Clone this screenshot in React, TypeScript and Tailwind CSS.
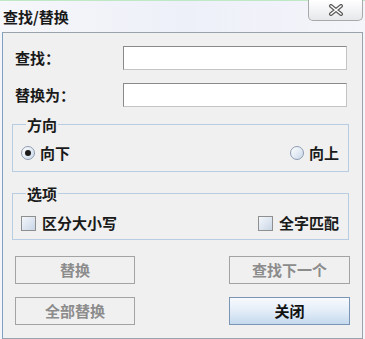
import React from "react";

const font = { fontFamily: '"Noto Sans CJK SC", "Noto Sans", sans-serif' };

function Radio({ checked }: { checked?: boolean }) {
  return (
    <span className="w-[14px] h-[14px] rounded-full border border-[#8e9bb0] bg-gradient-to-br from-[#ffffff] to-[#c9d8ea] flex items-center justify-center shrink-0">
      {checked && <span className="w-[6px] h-[6px] rounded-full bg-[#1a1a1a]" />}
    </span>
  );
}

function Check() {
  return (
    <span className="w-[15px] h-[15px] border border-[#8f8f8f] bg-gradient-to-br from-[#f4f7fb] to-[#c9d6e6] shrink-0" />
  );
}

function Btn({ children, primary }: { children: React.ReactNode; primary?: boolean }) {
  return primary ? (
    <div className="h-[28px] flex items-center justify-center border border-[#7b95b5] bg-gradient-to-b from-[#f7fafd] via-[#e3edf8] to-[#c5d9ee] text-[15px] font-bold text-[#111]">
      {children}
    </div>
  ) : (
    <div className="h-[28px] flex items-center justify-center border border-[#a3a3a3] bg-[#f0f0f0] text-[15px] font-bold text-[#8c8c8c]">
      {children}
    </div>
  );
}

export default function App() {
  return (
    <div className="w-[365px] h-[339px] overflow-hidden bg-[#f3f5f8] flex flex-col" style={font}>
      <div className="h-[1px] bg-[#bfe8c6]" />
      <div className="h-[31px] flex justify-between items-start bg-gradient-to-r from-[#f6f7fa] via-[#eef0f9] to-[#f4f5fa]">
        <div className="pl-[3px] pt-[7px] text-[15px] font-bold text-[#1a1a1a] leading-[17px]">查找/替换</div>
        <div className="w-[55px] h-[21px] mr-[2px] -mt-[1px] rounded-b-[5px] border border-[#a9a9a9] border-t-0 bg-gradient-to-b from-[#ffffff] to-[#e6e8eb] flex items-center justify-center">
          <svg width="16" height="12" viewBox="0 0 16 12">
            <path d="M3 2 L13 10 M13 2 L3 10" stroke="#5c5c5c" strokeWidth="4" strokeLinecap="round" />
            <path d="M3 2 L13 10 M13 2 L3 10" stroke="#ffffff" strokeWidth="1.6" strokeLinecap="round" />
          </svg>
        </div>
      </div>
      <div className="flex-1 ml-[2px] mr-[2px] border border-[#9aa3ad] border-l-[#7f9fc4] bg-[#f0f0f0] flex flex-col pl-[9px] pr-[12px]">
        <div className="mt-[13px] h-[24px] flex items-center">
          <span className="w-[111px] pl-[3px] text-[15px] font-bold text-[#1a1a1a]">查找：</span>
          <div className="w-[224px] h-[24px] border border-[#8a8a8a] border-r-[#c4c4c4] border-b-[#c4c4c4] bg-white" />
        </div>
        <div className="mt-[13px] h-[24px] flex items-center">
          <span className="w-[111px] pl-[3px] text-[15px] font-bold text-[#1a1a1a]">替换为：</span>
          <div className="w-[224px] h-[24px] border border-[#8a8a8a] border-r-[#c4c4c4] border-b-[#c4c4c4] bg-white" />
        </div>
        <fieldset className="mt-[10px] w-[337px] border border-[#b9cde2] px-[8px] pb-[10px] pt-[13px]">
          <legend className="ml-[5px] px-[1px] text-[15px] font-bold text-[#1a1a1a] leading-[15px]">方向</legend>
          <div className="h-[16px] flex items-center justify-between">
            <div className="flex items-center gap-[5px]">
              <Radio checked />
              <span className="text-[15px] font-bold text-[#1a1a1a]">向下</span>
            </div>
            <div className="flex items-center gap-[5px] pr-[1px]">
              <Radio />
              <span className="text-[15px] font-bold text-[#1a1a1a]">向上</span>
            </div>
          </div>
        </fieldset>
        <fieldset className="mt-[14px] w-[337px] border border-[#b9cde2] px-[8px] pb-[8px] pt-[14px]">
          <legend className="ml-[5px] px-[1px] text-[15px] font-bold text-[#1a1a1a] leading-[15px]">选项</legend>
          <div className="h-[16px] flex items-center justify-between">
            <div className="flex items-center gap-[6px]">
              <Check />
              <span className="text-[15px] font-bold text-[#1a1a1a]">区分大小写</span>
            </div>
            <div className="flex items-center gap-[6px] pr-[1px]">
              <Check />
              <span className="text-[15px] font-bold text-[#1a1a1a]">全字匹配</span>
            </div>
          </div>
        </fieldset>
        <div className="mt-[16px] flex justify-between pl-[3px]">
          <div className="w-[120px]"><Btn>替换</Btn></div>
          <div className="w-[121px]"><Btn>查找下一个</Btn></div>
        </div>
        <div className="mt-[13px] flex justify-between pl-[3px]">
          <div className="w-[120px]"><Btn>全部替换</Btn></div>
          <div className="w-[121px]"><Btn primary>关闭</Btn></div>
        </div>
      </div>
    </div>
  );
}
